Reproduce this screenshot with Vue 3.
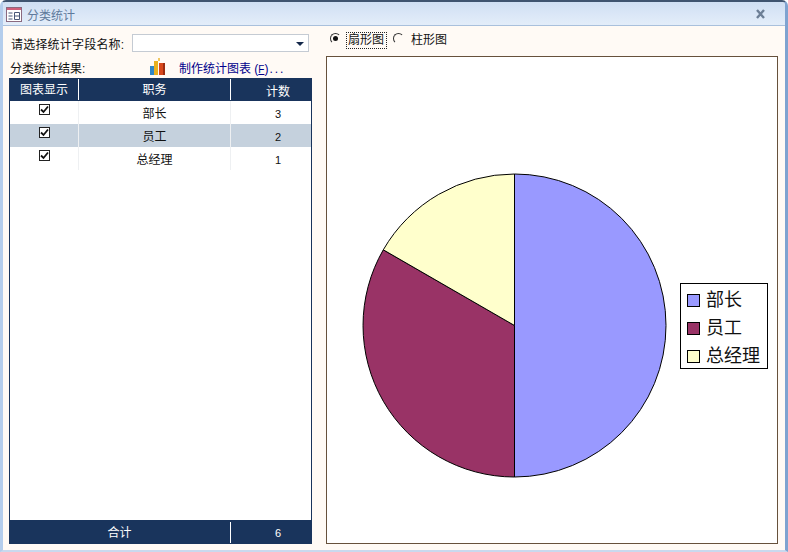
<template>
  <div class="window">
    <div class="titlebar">
      <svg class="form-icon" width="16" height="15" viewBox="0 0 16 15">
        <rect x="0.5" y="0.5" width="15" height="14" fill="#fff" stroke="#8a6a80" />
        <rect x="1" y="1" width="14" height="2" fill="#d0607c" />
        <path d="M2.5 6h4M2.5 9h4M2.5 12h4M8.5 5.5h5v7h-5zM8.5 9h5" fill="none" stroke="#4a5878" />
      </svg>
      <span class="title">分类统计</span>
      <svg class="close" width="12" height="10" viewBox="0 0 12 10">
        <path d="M2 1l7 8M9 1L2 9" stroke="#6d7f96" stroke-width="2.4" fill="none" />
      </svg>
    </div>

    <div class="content">
      <div class="left">
        <div class="field-row">
          <label>请选择统计字段名称:</label>
          <div class="combo"><span class="arrow"></span></div>
        </div>
        <div class="result-row">
          <span class="result-label">分类统计结果:</span>
          <svg class="chart-icon" width="17" height="17" viewBox="0 0 17 17">
            <rect x="1" y="8" width="4" height="9" fill="#2f86c8" />
            <rect x="5" y="3" width="4" height="14" fill="#e8b020" />
            <rect x="9" y="0" width="2" height="3" fill="#f0c860" />
            <rect x="10" y="5" width="6" height="12" fill="#d8481c" />
            <rect x="14" y="5" width="2" height="12" fill="#9c2c10" />
          </svg>
          <a class="make-link">制作统计图表 (<u>F</u>)<span class="dots">...</span></a>
        </div>

        <div class="grid">
          <div class="grid-row head">
            <div class="c1">图表显示</div>
            <div class="c2">职务</div>
            <div class="c3">计数</div>
          </div>
          <div class="rows">
            <div
              v-for="(row, i) in rows"
              :key="row.name"
              class="grid-row item"
              :class="{ selected: i === 1 }"
            >
              <div class="c1">
                <span class="check">
                  <svg width="9" height="9" viewBox="0 0 9 9">
                    <path d="M1 4.5l2.5 2.5L8 1.5" fill="none" stroke="#111" stroke-width="1.8" />
                  </svg>
                </span>
              </div>
              <div class="c2">{{ row.name }}</div>
              <div class="c3 num">{{ row.count }}</div>
            </div>
          </div>
          <div class="grid-row foot">
            <div class="total">合计</div>
            <div class="c3 num">6</div>
          </div>
        </div>
      </div>

      <div class="right">
        <div class="radios">
          <span class="radio on"></span>
          <span class="radio-label focused">扇形图</span>
          <span class="radio"></span>
          <span class="radio-label">柱形图</span>
        </div>
        <div class="chart">
          <svg class="pie" width="452" height="488" viewBox="326 56 452 488">
            <path
              v-for="s in slices"
              :key="s.name"
              :d="s.d"
              :fill="s.color"
              stroke="#000"
              stroke-width="1"
            />
          </svg>
          <div class="legend">
            <div v-for="s in slices" :key="s.name" class="legend-item">
              <span class="swatch" :style="{ background: s.color }"></span>
              <span>{{ s.name }}</span>
            </div>
          </div>
        </div>
      </div>
    </div>
  </div>
</template>

<script setup>
const rows = [
  { name: '部长', count: 3 },
  { name: '员工', count: 2 },
  { name: '总经理', count: 1 },
]

const cx = 514.5
const cy = 325.5
const r = 151.5

const point = (turn) => {
  const a = turn * Math.PI * 2
  return `${(cx + r * Math.sin(a)).toFixed(1)} ${(cy - r * Math.cos(a)).toFixed(1)}`
}

const piece = (from, to) =>
  `M${cx} ${cy}L${point(from)}A${r} ${r} 0 ${to - from > 0.5 ? 1 : 0} 1 ${point(to)}Z`

const slices = [
  { name: '部长', color: '#9999ff', d: piece(0, 1 / 2) },
  { name: '员工', color: '#993366', d: piece(1 / 2, 5 / 6) },
  { name: '总经理', color: '#ffffcc', d: piece(5 / 6, 1) },
]
</script>

<style>
html,
body {
  margin: 0;
  background: #fff;
}
</style>

<style scoped>
.window {
  box-sizing: border-box;
  width: 788px;
  height: 552px;
  display: flex;
  flex-direction: column;
  background: #fffaf5;
  border-style: solid;
  border-width: 2px 3px 2px 3px;
  border-color: #3f5470 #7fa3d0 #c9d9ee #b4cdec;
  border-radius: 6px 6px 0 0;
  font-family: "Liberation Sans", "Noto Sans CJK SC", sans-serif;
  font-size: 12px;
  color: #111;
  overflow: hidden;
}

.titlebar {
  box-sizing: border-box;
  height: 24px;
  flex: none;
  display: flex;
  align-items: center;
  padding: 2px 15px 0 3px;
  background: linear-gradient(#cfdff3, #dbe7f7 55%, #e3edf9);
  border-bottom: 1px solid #a9c0dc;
}

.title {
  margin-left: 5px;
  color: #5f7a9c;
  font-size: 12px;
}

.close {
  margin-left: auto;
  margin-top: -1px;
  margin-right: 3px;
}

.content {
  flex: 1;
  min-height: 0;
  display: flex;
  padding: 0 7px 6px 6px;
  gap: 14px;
}

.left {
  width: 303px;
  display: flex;
  flex-direction: column;
}

.field-row {
  height: 18px;
  margin-top: 8px;
  display: flex;
  align-items: center;
}

.field-row label {
  margin-left: 2px;
  width: 121px;
  letter-spacing: 0.2px;
  white-space: nowrap;
}

.combo {
  box-sizing: border-box;
  width: 177px;
  height: 18px;
  position: relative;
  background: #fff;
  border: 1px solid #c5cbd3;
}

.arrow {
  position: absolute;
  right: 4px;
  top: 7px;
  border: 4px solid transparent;
  border-top: 4px solid #14284a;
  border-bottom: 0;
}

.result-row {
  box-sizing: border-box;
  height: 26px;
  padding-top: 4px;
  display: flex;
  align-items: center;
}

.result-label {
  margin-left: 1px;
  width: 139px;
}

.chart-icon {
  margin-top: -2px;
}

.make-link {
  margin-left: 13px;
  color: #00008b;
  white-space: nowrap;
}

.make-link u {
  font-size: 10px;
}

.dots {
  letter-spacing: 2px;
  margin-left: 1px;
}

.grid {
  flex: 1;
  min-height: 0;
  display: flex;
  flex-direction: column;
  background: #fff;
  border: 1px solid #19345c;
  border-width: 0 1px;
}

.grid-row {
  display: flex;
  align-items: center;
  text-align: center;
}

.c1 {
  box-sizing: border-box;
  width: 69px;
}

.c2 {
  box-sizing: border-box;
  width: 152px;
}

.c3 {
  flex: 1;
  padding-left: 14px;
}

.num {
  font-size: 11px;
}

.head,
.foot {
  flex: none;
  background: #19345c;
  color: #fff;
}

.head {
  height: 23px;
}

.head .c1,
.head .c2,
.foot .total {
  height: 21px;
  line-height: 23px;
  border-right: 1px solid #fff;
}

.head .c3 {
  padding-top: 2px;
}

.foot {
  height: 24px;
}

.foot .total {
  box-sizing: border-box;
  width: 221px;
  padding-right: 1px;
}

.foot .c3 {
  padding-top: 2px;
}

.rows {
  flex: 1;
  min-height: 0;
}

.item {
  height: 23px;
}

.item .c1,
.item .c2 {
  height: 23px;
  line-height: 27px;
  border-right: 1px solid #eef0f2;
}

.item .c1 {
  line-height: 16px;
}

.item .c3 {
  padding-top: 2px;
}

.selected {
  background: #c5d1dd;
}

.check {
  box-sizing: border-box;
  display: inline-flex;
  align-items: center;
  justify-content: center;
  width: 11px;
  height: 11px;
  margin-top: 3px;
  background: #fff;
  border: 1px solid #222;
}

.right {
  flex: 1;
  display: flex;
  flex-direction: column;
  min-width: 0;
}

.radios {
  box-sizing: border-box;
  height: 30px;
  flex: none;
  display: flex;
  align-items: center;
  padding: 0 0 1px 4px;
}

.radio {
  box-sizing: border-box;
  width: 11px;
  height: 11px;
  margin-top: -4px;
  border-radius: 50%;
  background: #fffaf5;
  border: 1px solid;
  border-color: #333 #fffaf5 #fffaf5 #333;
  position: relative;
}

.radio.on::after {
  content: "";
  position: absolute;
  left: 2px;
  top: 2px;
  width: 5px;
  height: 5px;
  border-radius: 50%;
  background: #111;
}

.radio-label {
  box-sizing: border-box;
  height: 17px;
  line-height: 15px;
  padding: 0 2px 0 1px;
  margin-left: 5px;
  margin-right: 6px;
  border: 1px dotted transparent;
}

.radio-label.focused {
  border-color: #222;
}

.chart {
  flex: 1;
  min-height: 0;
  position: relative;
  background: #fff;
  box-shadow: inset 0 0 0 1px #66513c;
}

.pie {
  display: block;
}

.legend {
  box-sizing: border-box;
  position: absolute;
  left: 354px;
  top: 227px;
  width: 88px;
  height: 86px;
  padding: 10px 0 0 6px;
  display: flex;
  flex-direction: column;
  gap: 15px;
  background: #fff;
  border: 1px solid #000;
  font-size: 18px;
}

.legend-item {
  display: flex;
  align-items: center;
  gap: 6px;
  height: 13px;
  line-height: 13px;
  white-space: nowrap;
}

.swatch {
  box-sizing: border-box;
  width: 13px;
  height: 13px;
  flex: none;
  border: 1px solid #000;
}
</style>
